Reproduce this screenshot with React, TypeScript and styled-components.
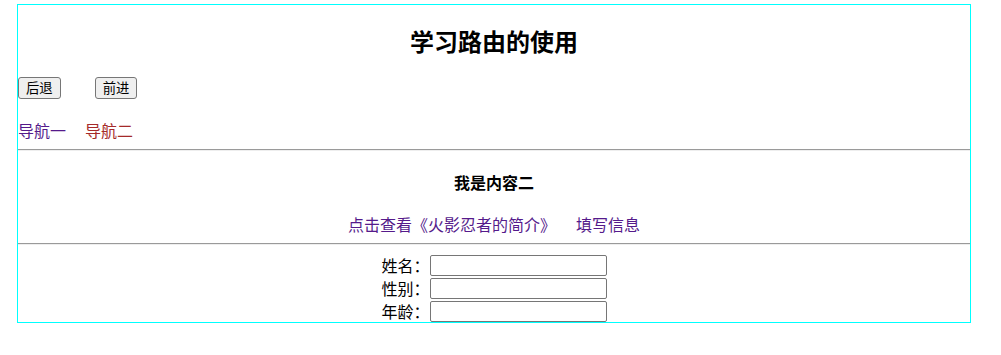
import styled, { createGlobalStyle } from "styled-components"

const GlobalStyle = createGlobalStyle`
body {
  margin: 0;
  background: #fff;
  font-family: "Noto Sans CJK SC", "Microsoft YaHei", sans-serif;
  color: #000;
}
`

const Wrapper = styled.div`
width: 952px;
margin: 4px 0 0 17px;
border: 1px solid #00ffff;
`

const Title = styled.h2`
margin: 19px 0 19px;
font-size: 24px;
line-height: 34px;
font-weight: bold;
text-align: center;
`

const BtnRow = styled.div`
display: flex;
gap: 34px;
`

const Btn = styled.button`
height: 22px;
padding: 1px 7px;
font-family: "Noto Sans CJK SC", sans-serif;
font-size: 13.33px;
line-height: 16px;
color: #000;
background: #efefef;
border: 1px solid #767676;
border-radius: 3px;
`

const Nav = styled.nav`
display: flex;
gap: 19px;
margin-top: 21px;
font-size: 16px;
line-height: 21px;
`

const NavLink = styled.a<{ $active?: boolean }>`
color: ${(p) => (p.$active ? "#a52a2a" : "#551a8b")};
text-decoration: none;
cursor: pointer;
`

const Line = styled.hr`
margin: 8px 0 0;
border: none;
border-top: 1px solid #9a9a9a;
border-bottom: 1px solid #eeeeee;
height: 0;
`

const SubTitle = styled.h4`
margin: 21px 0;
font-size: 16px;
line-height: 21px;
text-align: center;
`

const Links = styled.div`
display: flex;
justify-content: center;
gap: 20px;
font-size: 16px;
line-height: 21px;
`

const Form = styled.form`
display: flex;
flex-direction: column;
align-items: center;
gap: 2px;
margin-top: 8px;
padding-top: 2px;
`

const Row = styled.div`
display: flex;
align-items: center;
height: 21px;
`

const Label = styled.label`
width: 48px;
font-size: 16px;
line-height: 21px;
`

const Input = styled.input`
box-sizing: border-box;
width: 177px;
height: 21px;
padding: 1px 2px;
border: 1px solid #767676;
border-radius: 2px;
font-size: 13.33px;
outline: none;
`

const App = () => {
  const fields = ["姓名：", "性别：", "年龄："]
  return (
    <>
      <GlobalStyle />
      <Wrapper>
        <Title>学习路由的使用</Title>
        <BtnRow>
          <Btn>后退</Btn>
          <Btn>前进</Btn>
        </BtnRow>
        <Nav>
          <NavLink>导航一</NavLink>
          <NavLink $active>导航二</NavLink>
        </Nav>
        <Line />
        <SubTitle>我是内容二</SubTitle>
        <Links>
          <NavLink>点击查看《火影忍者的简介》</NavLink>
          <NavLink>填写信息</NavLink>
        </Links>
        <Line />
        <Form>
          {fields.map((f) => (
            <Row key={f}>
              <Label>{f}</Label>
              <Input type="text" />
            </Row>
          ))}
        </Form>
      </Wrapper>
    </>
  )
}

export default App
